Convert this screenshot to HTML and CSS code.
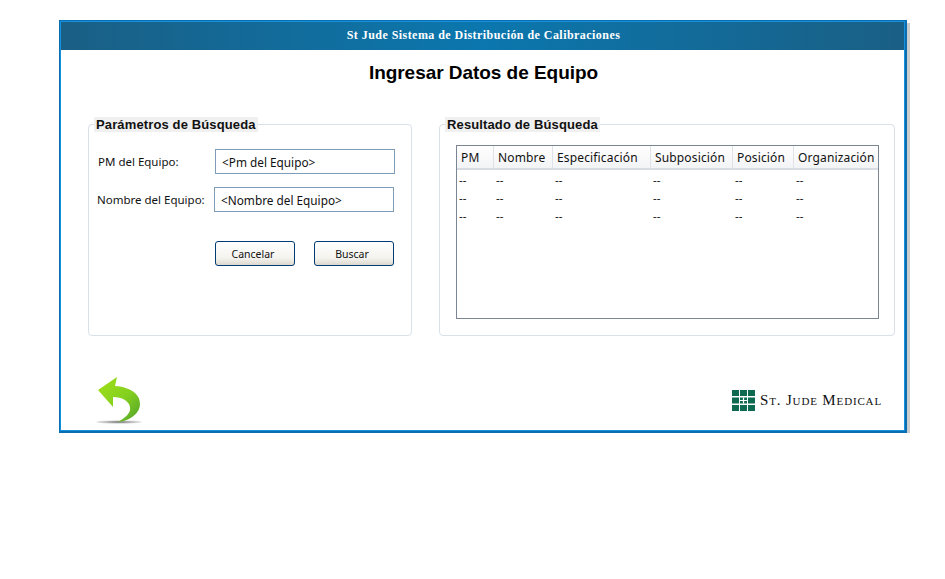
FILE: index.html
```html
<!DOCTYPE html>
<html lang="es">
<head>
    <meta charset="UTF-8">
    <title>Ingresar Datos de Equipo</title>
    <link rel="stylesheet" href="styles.css">
</head>
<body>
    <div class="window">
        <div class="header">St Jude Sistema de Distribución de Calibraciones</div>
        <h1 class="title">Ingresar Datos de Equipo</h1>

        <div class="panels">
            <fieldset class="panel panel-search">
                <legend>Parámetros de Búsqueda</legend>
                <div class="field field-pm">
                    <label for="pm">PM del Equipo:</label>
                    <input type="text" id="pm" value="&lt;Pm del Equipo&gt;">
                </div>
                <div class="field field-name">
                    <label for="nombre">Nombre del Equipo:</label>
                    <input type="text" id="nombre" value="&lt;Nombre del Equipo&gt;">
                </div>
                <div class="buttons">
                    <button type="button">Cancelar</button>
                    <button type="button">Buscar</button>
                </div>
            </fieldset>

            <fieldset class="panel panel-results">
                <legend>Resultado de Búsqueda</legend>
                <div class="table-box">
                    <table>
                        <colgroup>
                            <col class="c1"><col class="c2"><col class="c3"><col class="c4"><col class="c5"><col class="c6">
                        </colgroup>
                        <thead>
                            <tr>
                                <th>PM</th>
                                <th>Nombre</th>
                                <th>Especificación</th>
                                <th>Subposición</th>
                                <th>Posición</th>
                                <th>Organización</th>
                            </tr>
                        </thead>
                        <tbody>
                            <tr><td>--</td><td>--</td><td>--</td><td>--</td><td>--</td><td>--</td></tr>
                            <tr><td>--</td><td>--</td><td>--</td><td>--</td><td>--</td><td>--</td></tr>
                            <tr><td>--</td><td>--</td><td>--</td><td>--</td><td>--</td><td>--</td></tr>
                        </tbody>
                    </table>
                </div>
            </fieldset>
        </div>

        <div class="footer">
            <svg class="back" width="48" height="50" viewBox="0 0 48 50" aria-label="Volver">
                <defs>
                    <linearGradient id="arrowFill" x1="0" y1="0" x2="1" y2="1">
                        <stop offset="0" stop-color="#a2e018"/>
                        <stop offset="0.55" stop-color="#84d020"/>
                        <stop offset="1" stop-color="#4fa02a"/>
                    </linearGradient>
                    <radialGradient id="arrowShadow">
                        <stop offset="0" stop-color="#666"/>
                        <stop offset="1" stop-color="#aaa" stop-opacity="0.3"/>
                    </radialGradient>
                </defs>
                <ellipse cx="24" cy="47" rx="23" ry="1.8" fill="url(#arrowShadow)"/>
                <path d="M3 15 L22 2 L20 11 C34 12 45 18 45 29 C45 38 35 46 23 47 C31 42 36 38 35 32 C34 26 27 22 18 22 L18 32 Z" fill="url(#arrowFill)"/>
            </svg>
            <div class="logo">
                <svg width="23" height="21" viewBox="0 0 23 21">
                    <g fill="#0d6a50">
                        <rect x="0" y="0" width="7" height="6"/>
                        <rect x="8" y="0" width="7" height="6"/>
                        <rect x="16" y="0" width="7" height="6"/>
                        <rect x="0" y="7.5" width="7" height="6"/>
                        <rect x="8" y="7.5" width="7" height="6"/>
                        <rect x="16" y="7.5" width="7" height="6"/>
                        <rect x="0" y="15" width="7" height="6"/>
                        <rect x="8" y="15" width="7" height="6"/>
                        <rect x="16" y="15" width="7" height="6"/>
                    </g>
                    <path d="M11.5 7.5V13.5M8 10.5H15" stroke="#fff" stroke-width="1.2"/>
                </svg>
                <span class="logo-text">St. Jude Medical</span>
            </div>
        </div>
    </div>
</body>
</html>
```

FILE: styles.css
```css
body {
    margin: 0;
    background-color: #fff;
    font-family: "Noto Sans", Arial, sans-serif;
    font-size: 11.5px;
    color: #111;
}
.window {
    box-sizing: border-box;
    width: 848px;
    height: 413px;
    margin: 20px 0 0 59px;
    border: 1px solid #0a6eb0;
    border-right-width: 2px;
    border-bottom-width: 2px;
    box-shadow: inset 1px 1px 0 #1590dc, inset -1px -1px 0 #1590dc, 3px 3px 0 #ccc;
    background-color: #fff;
}
.header {
    height: 28px;
    line-height: 27px;
    margin: 1px 1px 0 1px;
    padding-left: 2px;
    text-align: center;
    color: #fff;
    font-family: "Liberation Serif", "Times New Roman", serif;
    font-size: 12px;
    font-weight: bold;
    letter-spacing: 0.45px;
    background: linear-gradient(to right, #1a5f85, #0b77ae 50%, #1a5f85);
}
.title {
    margin: 12px 0 0 0;
    padding-left: 2px;
    text-align: center;
    font-family: "Liberation Sans", Arial, sans-serif;
    font-size: 19px;
    line-height: 22px;
    font-weight: bold;
    letter-spacing: -0.04px;
    color: #000;
}
.panels {
    display: flex;
    gap: 27px;
    margin: 33px 0 0 28px;
}
.panel {
    box-sizing: border-box;
    height: 219px;
    margin: 0;
    padding: 0;
    border: 1px solid #d8e0e8;
    border-radius: 4px;
}
.panel legend {
    margin-left: 5px;
    padding: 0 2px;
    background-color: #f0f0f0;
    font-family: "Liberation Sans", Arial, sans-serif;
    font-size: 13px;
    font-weight: bold;
    letter-spacing: 0.13px;
    line-height: 15px;
    color: #111;
}
.panel-search {
    width: 324px;
}
.panel-results {
    width: 456px;
}
.field {
    display: flex;
    align-items: center;
}
.field label {
    flex: none;
}
.field input {
    box-sizing: border-box;
    width: 180px;
    height: 25px;
    padding: 0 6px;
    border: 1px solid #7f9db9;
    font-family: "Noto Sans", Arial, sans-serif;
    font-size: 11.8px;
    color: #111;
    border-radius: 0;
}
.field-pm {
    margin: 17px 0 0 9px;
}
.field-pm label {
    width: 117px;
}
.field-name {
    margin: 13px 0 0 8px;
}
.field-name label {
    width: 117px;
}
.buttons {
    display: flex;
    gap: 19px;
    margin: 29px 0 0 126px;
}
.buttons button {
    box-sizing: border-box;
    width: 80px;
    height: 25px;
    padding: 0 4px 0 0;
    border: 1px solid #003c74;
    border-radius: 3px;
    background: linear-gradient(to bottom, #fff, #f4f3ee 70%, #dcd8ce);
    font-family: "Noto Sans", Arial, sans-serif;
    font-size: 10.5px;
    color: #111;
}
.table-box {
    box-sizing: border-box;
    width: 423px;
    height: 174px;
    margin: 13px 0 0 16px;
    border: 1px solid #7b8694;
}
table {
    table-layout: fixed;
    width: 421px;
    border-collapse: separate;
    border-spacing: 0;
}
.c1 { width: 37px; }
.c2 { width: 59px; }
.c3 { width: 98px; }
.c4 { width: 82px; }
.c5 { width: 61px; }
.c6 { width: 84px; }
th {
    height: 22px;
    padding: 0 0 0 4px;
    text-align: left;
    font-size: 12px;
    font-weight: normal;
    letter-spacing: 0.15px;
    color: #111;
    background: linear-gradient(to bottom, #fff, #f3f4f6);
    border-right: 1px solid #dfe3e8;
    border-bottom: 2px solid #d8dce2;
}
th:last-child {
    border-right: none;
}
td {
    height: 18px;
    padding: 0 0 0 2px;
    line-height: 18px;
}
tbody tr:first-child td {
    padding-top: 1px;
}
.footer {
    display: flex;
    justify-content: space-between;
    align-items: flex-end;
    margin: 39px 0 0 35px;
}
.back {
    display: block;
}
.logo {
    display: flex;
    align-items: center;
    gap: 5px;
    margin: 0 23px 14px 0;
}
.logo-text {
    font-family: "Liberation Serif", "Times New Roman", serif;
    font-variant: small-caps;
    font-size: 15px;
    line-height: 21px;
    letter-spacing: 0.85px;
    color: #111;
}
```
